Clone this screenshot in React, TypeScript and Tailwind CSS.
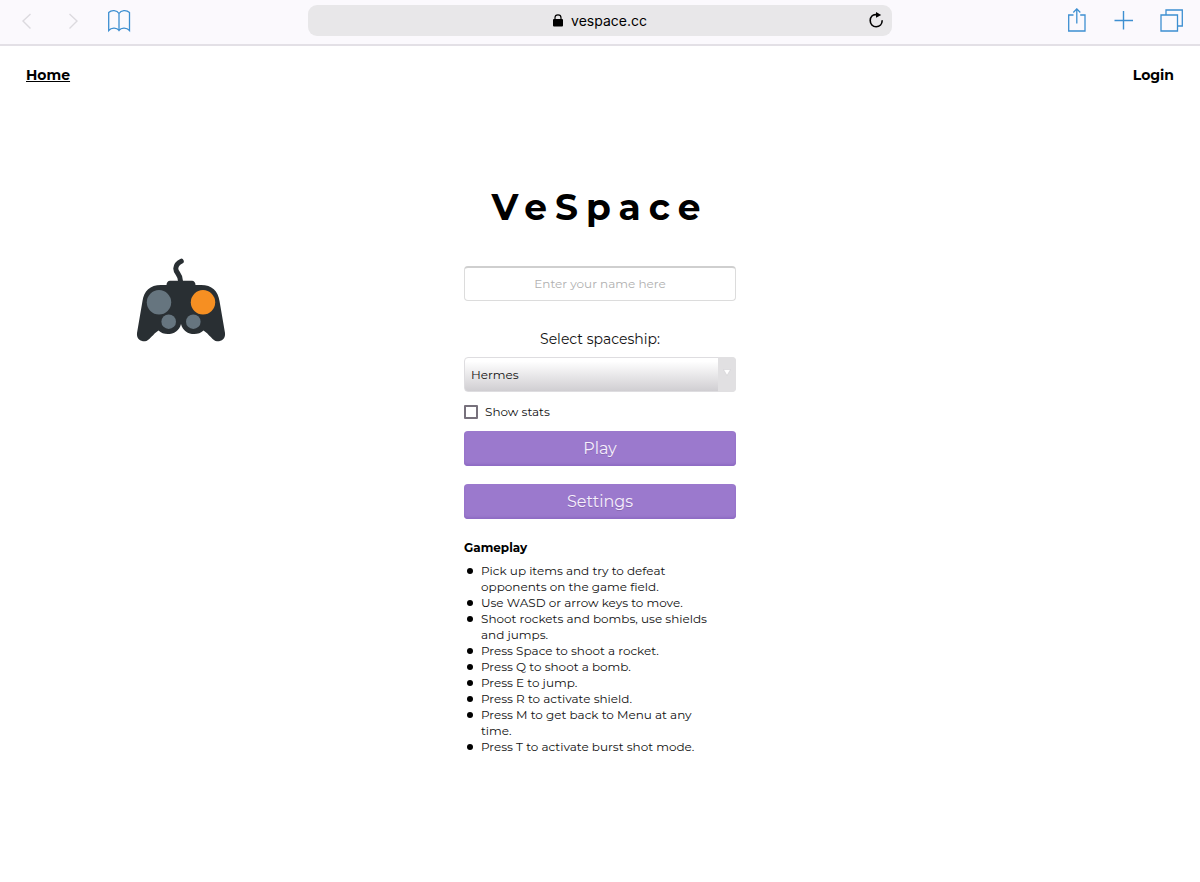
import { useState } from "react";

const SHIPS = ["Hermes", "Apollo", "Artemis"];

const RULES = [
  "Pick up items and try to defeat opponents on the game field.",
  "Use WASD or arrow keys to move.",
  "Shoot rockets and bombs, use shields and jumps.",
  "Press Space to shoot a rocket.",
  "Press Q to shoot a bomb.",
  "Press E to jump.",
  "Press R to activate shield.",
  "Press M to get back to Menu at any time.",
  "Press T to activate burst shot mode.",
];

function Toolbar() {
  return (
    <header className="grid grid-cols-[1fr_584px_1fr] items-center border-b-2 border-[#e3e0e6] bg-[#fbf9fd] px-4 pt-[5px] pb-2 text-[#3d8fd1]">
      <div className="flex items-center gap-[22px]">
        <button aria-label="Back" className="text-[#dcdadf]">
          <svg width="24" height="24" viewBox="0 0 24 24" fill="none" stroke="currentColor" strokeWidth="1.4">
            <path d="M14.5 5 L7 12 L14.5 19.5" />
          </svg>
        </button>
        <button aria-label="Forward" className="text-[#dcdadf]">
          <svg width="24" height="24" viewBox="0 0 24 24" fill="none" stroke="currentColor" strokeWidth="1.4">
            <path d="M7.5 5 L15 12 L7.5 19.5" />
          </svg>
        </button>
        <button aria-label="Bookmarks">
          <svg width="24" height="24" viewBox="0 0 24 24" fill="none" stroke="currentColor" strokeWidth="1.3">
            <path d="M11 4.5 C9 1 3.5 .8 .7 3.5 V21.5 C3.5 18 9 18.5 11 21.5 C13 18.5 18.5 18 21.5 21.5 V3.5 C18.5 .8 13 1 11 4.5 V22" />
          </svg>
        </button>
      </div>

      <div className="flex h-[31px] items-center rounded-[9px] bg-[#e8e7e9] px-2 text-black">
        <span className="w-4" />
        <div className="flex flex-1 items-center justify-center gap-2 font-[Inter,sans-serif] text-sm">
          <svg width="10" height="13" viewBox="0 0 10 13">
            <rect x="0" y="5" width="10" height="7.5" rx="1" />
            <path d="M2 6 V3.7 C2 -.1 8 -.1 8 3.7 V6" fill="none" stroke="currentColor" strokeWidth="1.2" />
          </svg>
          vespace.cc
        </div>
        <button aria-label="Reload">
          <svg width="16" height="18" viewBox="0 0 16 18" fill="none">
            <path d="M9 2.8 C4.5 1.9 2.2 5 2.2 8.5 C2.2 12 4.7 14.8 8.1 14.8 C11.6 14.8 14.2 12.1 14.2 8.3" stroke="currentColor" strokeWidth="1.6" />
            <path d="M8 0 L13.2 3 L8 5.8 Z" fill="currentColor" />
          </svg>
        </button>
      </div>

      <div className="flex items-center justify-end gap-6">
        <button aria-label="Share">
          <svg width="20" height="26" viewBox="0 0 20 26" fill="none" stroke="currentColor" strokeWidth="1.3">
            <path d="M5.5 7 H.7 V23 H17 V7 H12.2 M8.8 15.5 V1 M5.3 4.5 L8.8 .9 L12.3 4.5" />
          </svg>
        </button>
        <button aria-label="New tab">
          <svg width="24" height="24" viewBox="0 0 24 24" fill="none" stroke="currentColor" strokeWidth="1.4">
            <path d="M11.5 2 V20.5 M2.5 11.5 H21" />
          </svg>
        </button>
        <button aria-label="Tabs">
          <svg width="24" height="24" viewBox="0 0 24 24" fill="none" stroke="currentColor" strokeWidth="1.3">
            <path d="M1 6 H17.5 V22 H1 Z M6 6 V1 H22.3 V17 H17.5" />
          </svg>
        </button>
      </div>
    </header>
  );
}

function Gamepad() {
  return (
    <svg width="90" height="84" viewBox="0 0 90 84" aria-hidden="true">
      <path
        d="M44.5 25 C45.5 16 39.5 15.5 39.8 10.5 C40 6.5 42.5 4.5 45.3 3.2"
        fill="none"
        stroke="#292f33"
        strokeWidth="5"
        strokeLinecap="round"
      />
      <path
        d="M30.5 27 C30.5 24.5 32 22.7 34 22.7 H56 C58 22.7 59.5 24.5 59.5 27 H65 C76 27 82 33 83.5 43 L89 75 C89.6 81 85.5 83.5 81 83.3 C77 83 73 76 67.5 72.5 C61 79 47 76.5 45 66 C43 76.5 29 79 22.5 72.5 C17 76 13 83 9 83.3 C4.5 83.5 .4 81 1 75 L6.5 43 C8 33 14 27 25 27 Z"
        fill="#292f33"
      />
      <circle cx="23" cy="44.3" r="12.2" fill="#66757f" />
      <circle cx="67" cy="44.3" r="12.2" fill="#f68f22" />
      <circle cx="32.7" cy="63.7" r="7.3" fill="#66757f" />
      <circle cx="57.3" cy="63.7" r="7.3" fill="#66757f" />
    </svg>
  );
}

export default function App() {
  const [name, setName] = useState("");
  const [ship, setShip] = useState(SHIPS[0]);
  const [showStats, setShowStats] = useState(false);

  return (
    <div className="min-h-screen bg-white font-[Montserrat,Inter,sans-serif] text-[#111]">
      <Toolbar />

      <nav className="flex justify-between px-[26px] pt-[19px] pb-5 text-sm leading-5 font-bold text-black">
        <a href="#home" className="underline">
          Home
        </a>
        <a href="#login">Login</a>
      </nav>

      <main className="grid grid-cols-[1fr_272px_1fr] pt-20">
        <div className="pt-[73px] pl-34">
          <Gamepad />
        </div>

        <div className="flex flex-col">
          <h1 className="text-center text-4xl leading-[44px] font-bold tracking-[8px] text-black">
            VeSpace
          </h1>

          <input
            type="text"
            aria-label="Name"
            placeholder="Enter your name here"
            value={name}
            onChange={(e) => setName(e.target.value)}
            className="mt-[37px] h-[35px] rounded border border-t-2 border-[#dcdcdc] border-t-[#cfcfcf] pb-0.5 text-center text-xs placeholder:text-[#b0b0b0]"
          />

          <label htmlFor="ship" className="mt-[26px] text-center text-sm leading-6">
            Select spaceship:
          </label>
          <div className="relative mt-1.5">
            <select
              id="ship"
              value={ship}
              onChange={(e) => setShip(e.target.value)}
              className="block h-[35px] w-full appearance-none rounded border border-[#dedde0] bg-linear-to-b from-white from-10% to-[#d0ced2] px-1.5 text-xs"
            >
              {SHIPS.map((s) => (
                <option key={s}>{s}</option>
              ))}
            </select>
            <span className="pointer-events-none absolute inset-y-0 right-0 flex w-[18px] items-center justify-center rounded-r bg-[#e1e0e2] pb-1">
              <svg width="8" height="7" viewBox="0 0 8 7" className="shrink-0">
                <path d="M.5 .5 H7.5 L4 6.5 Z" fill="#fff" stroke="#cccbce" strokeWidth=".5" />
              </svg>
            </span>
          </div>

          <label className="mt-2.5 flex items-center gap-[7px] text-xs leading-5">
            <input
              type="checkbox"
              checked={showStats}
              onChange={(e) => setShowStats(e.target.checked)}
              className="size-3.5 appearance-none rounded-[1px] border-2 border-[#77717c] bg-white checked:bg-[#9b79cd]"
            />
            Show stats
          </label>

          <button className="mt-[9px] h-[35px] rounded bg-[#9b79cd] text-base text-[#f6effc] inset-shadow-[0_-2px_2px_#8f6cc4] text-shadow-2xs">
            Play
          </button>
          <button className="mt-[18px] h-[35px] rounded bg-[#9b79cd] text-base text-[#f6effc] inset-shadow-[0_-2px_2px_#8f6cc4] text-shadow-2xs">
            Settings
          </button>

          <h2 className="mt-[21px] text-xs leading-4 font-bold text-black">Gameplay</h2>
          <ul className="mt-[7px] pr-3 pl-[3px] text-xs leading-4">
            {RULES.map((rule) => (
              <li
                key={rule}
                className="flex gap-2 before:mt-[5px] before:size-1.5 before:shrink-0 before:rounded-full before:bg-black"
              >
                {rule}
              </li>
            ))}
          </ul>
        </div>
      </main>
    </div>
  );
}
